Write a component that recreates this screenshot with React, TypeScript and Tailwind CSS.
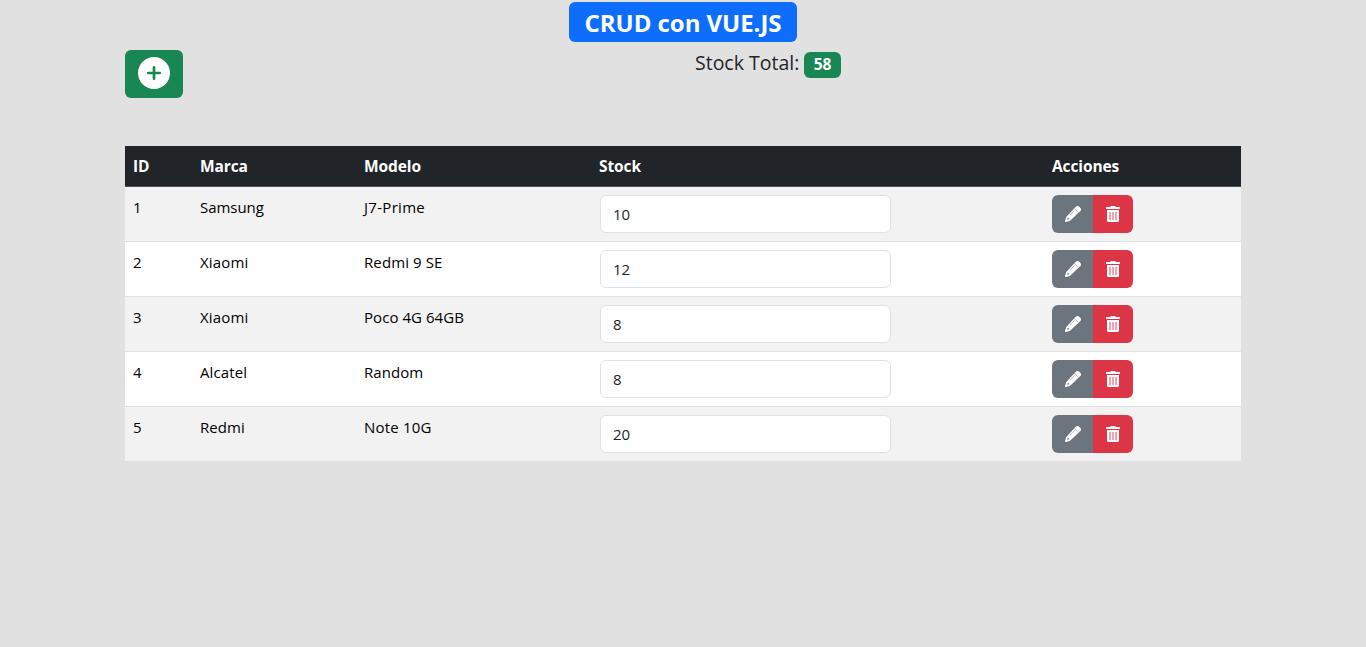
import React, { useState } from "react";

type Phone = { id: number; marca: string; modelo: string; stock: number; marcaClass: string; modeloClass: string };

const initial: Phone[] = [
  { id: 1, marca: "Samsung", modelo: "J7-Prime", stock: 10, marcaClass: "tracking-[-0.05px]", modeloClass: "tracking-[0.3px]" },
  { id: 2, marca: "Xiaomi", modelo: "Redmi 9 SE", stock: 12, marcaClass: "tracking-[0.15px]", modeloClass: "tracking-[0.1px]" },
  { id: 3, marca: "Xiaomi", modelo: "Poco 4G 64GB", stock: 8, marcaClass: "tracking-[0.15px]", modeloClass: "tracking-[0.05px]" },
  { id: 4, marca: "Alcatel", modelo: "Random", stock: 8, marcaClass: "tracking-[0.1px]", modeloClass: "tracking-[0.05px]" },
  { id: 5, marca: "Redmi", modelo: "Note 10G", stock: 20, marcaClass: "tracking-[0.05px]", modeloClass: "tracking-[0.2px]" },
];

const columns = "grid grid-cols-[67px_164px_236px_452px_197px]";

function PlusCircleIcon() {
  return (
    <svg viewBox="0 0 32 32" className="size-8" aria-hidden="true">
      <circle cx="16" cy="16" r="16" fill="#fff" />
      <path d="M16 10.3v11.4M10.3 16h11.4" stroke="#198754" strokeWidth="2.7" strokeLinecap="round" />
    </svg>
  );
}

function PencilIcon() {
  return (
    <svg viewBox="0 0 16 16" className="size-4" aria-hidden="true">
      <path
        d="M11.1.6a2 2 0 0 1 2.8 0l1.5 1.5a2 2 0 0 1 0 2.8L5.6 14.3a2.5 2.5 0 0 1-1 .6L.9 16a.7.7 0 0 1-.9-.9l1.1-3.7a2.5 2.5 0 0 1 .6-1z"
        fill="#fff"
      />
      <path d="m9.7 2.6 3.7 3.7M5.1 9l4.600-4.600" stroke="#6c757d" strokeWidth=".5" fill="none" />
      <path d="m2.700 11.700-.5 2.100 2.100-.6v-.7h-.9v-.8z" fill="#6c757d" />
    </svg>
  );
}

function TrashIcon() {
  return (
    <svg viewBox="0 0 14 16" className="h-4 w-3.5" aria-hidden="true">
      <path d="M.5 1h3.7l.3-.6A.8.8 0 0 1 5.2 0h3.6c.3 0 .6.2.7.4l.3.6h3.7c.3 0 .5.2.5.5v1c0 .3-.2.5-.5.5H.5a.5.5 0 0 1-.5-.5v-1C0 1.2.2 1 .5 1z" fill="#fff" />
      <path d="M1 4h12v10.500a1.500 1.500 0 0 1-1.500 1.500h-9A1.500 1.500 0 0 1 1 14.500z" fill="#fff" />
      <path d="M4 6.300v7.400M7 6.300v7.400M10 6.300v7.400" stroke="#dc3545" strokeWidth=".9" strokeLinecap="round" />
    </svg>
  );
}

export default function App() {
  const [phones, setPhones] = useState(initial);
  const total = phones.reduce((sum, p) => sum + p.stock, 0);

  return (
    <div className="min-h-screen bg-[#e1e1e1] font-['Open_Sans','Noto_Sans',sans-serif] text-base leading-6 text-[#212529]">
      <div className="mx-auto w-[1116px]">
        <header className="flex justify-center pt-0.5">
          <h1 className="flex h-10 w-[228px] items-center justify-center rounded-md bg-[#0d6efd] pt-px text-[24px] font-bold tracking-[-0.05px] whitespace-nowrap text-white">
            CRUD con VUE.JS
          </h1>
        </header>

        <div className="flex items-start pt-2">
          <button type="button" aria-label="+" className="flex h-12 w-[58px] items-start justify-center rounded-md bg-[#198754] pt-[7px] text-white">
            <PlusCircleIcon />
          </button>
          <div className="ml-[512px] flex items-start gap-[5px] pt-0.5">
            <span className="w-[104px] text-[19.5px] leading-[22px] font-medium whitespace-nowrap">Stock Total:</span>
            <span className="flex h-[26px] w-[37px] items-center justify-center rounded-md bg-[#198754] pb-0.5 text-[15.5px] font-bold text-white">{total}</span>
          </div>
        </div>

        <div className="mt-12">
          <div className={`${columns} h-[41px] border-b border-[#4d5154] bg-[#212529] pt-2 text-[15.5px] font-bold tracking-[-0.1px] text-white`}>
            <span className="pl-2">ID</span>
            <span className="pl-2">Marca</span>
            <span className="pl-2">Modelo</span>
            <span className="pl-[7px]">Stock</span>
            <span className="pl-2">Acciones</span>
          </div>
          {phones.map((phone) => (
            <div key={phone.id} className={`${columns} h-[55px] border-b border-[#dfe0e1] bg-white pt-2 text-[15px] text-black even:bg-[#f2f2f2]`}>
              <span className="pl-2">{phone.id}</span>
              <span className={`pl-2 ${phone.marcaClass}`}>{phone.marca}</span>
              <span className={`pl-2 ${phone.modeloClass}`}>{phone.modelo}</span>
              <div className="pl-2">
                <input
                  className="block h-[38px] w-[291px] rounded-md border border-[#dee2e6] bg-white px-3 py-1.5 text-[15px] text-[#212529] outline-none"
                  value={phone.stock}
                  onChange={(e) =>
                    setPhones(phones.map((p) => (p.id === phone.id ? { ...p, stock: Number(e.target.value) || 0 } : p)))
                  }
                />
              </div>
              <div className="flex pl-2 text-white">
                <button type="button" className="flex h-[38px] w-[41px] items-center justify-center rounded-l-md bg-[#6c757d] pl-px">
                  <PencilIcon />
                </button>
                <button type="button" className="flex h-[38px] w-10 items-center justify-center rounded-r-md bg-[#dc3545]">
                  <TrashIcon />
                </button>
              </div>
            </div>
          ))}
        </div>
      </div>
    </div>
  );
}
